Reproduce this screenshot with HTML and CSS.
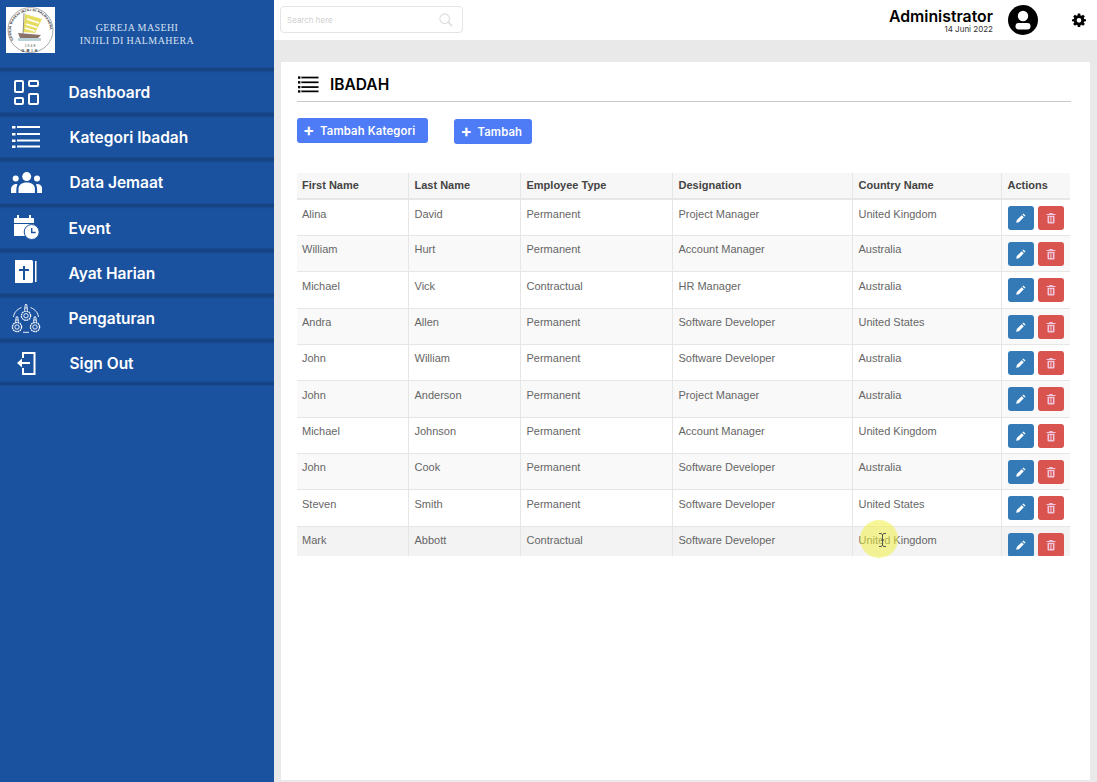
FILE: index.html
```html
<!DOCTYPE html>
<html lang="id">
<head>
<meta charset="utf-8">
<title>Ibadah</title>
<link rel="stylesheet" href="styles.css">
</head>
<body>
<div class="app">
  <aside class="sidebar">
    <div class="brand">
      <svg class="logo" viewBox="0 0 49 46">
        <rect width="49" height="46" fill="#fff"/>
        <circle cx="24.500" cy="23" r="22.500" fill="none" stroke="#555" stroke-width=".5"/>
        <path id="logo-arc" d="M7.500 33 A19.500 19.500 0 1 1 41.500 33" fill="none"/>
        <text class="logo-ring"><textPath href="#logo-arc">GEREJA MASEHI INJILI DI HALMAHERA</textPath></text>
        <path d="M19 7 L36 12 L29 26 L17 25 Z" fill="#e7dc62"/>
        <path d="M21 12 L33 16 M20 17 L31 20.500 M19 21 L29 24" stroke="#fff" stroke-width="1.600"/>
        <path d="M18 6 L17 28" stroke="#666" stroke-width=".7"/>
        <path d="M12 26 L35 28 L32 31 L14 31 Z" fill="#8a7268"/>
        <rect x="12" y="31" width="23" height="3" fill="#b9d3d8"/>
        <text x="24.500" y="39.500" class="logo-year">1948</text>
        <text x="24.500" y="45" class="logo-gmih">GMIH</text>
      </svg>
      <div class="brand-name">GEREJA MASEHI<br>INJILI DI HALMAHERA</div>
    </div>
    <nav class="menu">
      <a class="menu-item">
        <svg class="menu-icon" viewBox="0 0 34 34" fill="none" stroke="#fff" stroke-width="2"><rect x="7" y="7" width="8" height="11" rx="1"/><rect x="21" y="7" width="9" height="5" rx="1"/><rect x="7" y="24" width="8" height="6" rx="1"/><rect x="21" y="20" width="9" height="10" rx="1"/></svg>
        <span>Dashboard</span>
      </a>
      <a class="menu-item shift">
        <svg class="menu-icon" viewBox="0 0 34 34" fill="#fff"><use href="#list-icon"/></svg>
        <span>Kategori Ibadah</span>
      </a>
      <a class="menu-item shift">
        <svg class="menu-icon" viewBox="0 0 34 34" fill="#fff"><circle cx="18.700" cy="12.600" r="4.500"/><circle cx="7.700" cy="14.600" r="3"/><circle cx="29" cy="14.600" r="3"/><path d="M10.500 29v-4c0-4 3-6.500 8.200-6.500s8.200 2.500 8.200 6.500v4z"/><path d="M3 29v-3c0-3.500 2-6 5.500-6 .5 0 1 .2 1 .5C8.500 22 8.300 25 8.300 29z"/><path d="M34.500 29v-3c0-3.500-2-6-5.500-6-.5 0-1 .2-1 .5 1 1.500 1.200 4.500 1.200 8.500z"/></svg>
        <span>Data Jemaat</span>
      </a>
      <a class="menu-item">
        <svg class="menu-icon" viewBox="0 0 34 34" fill="#fff"><rect x="6" y="9" width="20" height="5" rx=".5"/><rect x="9" y="6" width="2" height="5"/><rect x="21" y="6" width="2" height="5"/><rect x="6" y="15" width="20" height="12"/><circle cx="23.700" cy="23" r="7.500" stroke="#1a52a0"/><path d="M23.700 19v4.500h4" fill="none" stroke="#1a52a0" stroke-width="1.400"/></svg>
        <span>Event</span>
      </a>
      <a class="menu-item">
        <svg class="menu-icon" viewBox="0 0 34 34" fill="#fff"><path d="M7 6h16.500A1.500 1.500 0 0 1 25 7.500v20a1.500 1.500 0 0 1-1.500 1.500H7z"/><rect x="27" y="7" width="1.500" height="21"/><path d="M15 12h2v3h4v2h-4v9h-2v-9h-4v-2h4z" fill="#1a52a0"/></svg>
        <span>Ayat Harian</span>
      </a>
      <a class="menu-item">
        <svg class="menu-icon" viewBox="0 0 34 34" fill="none" stroke="#fff" stroke-width=".9"><circle cx="18" cy="15.700" r="4.600" stroke-width="1.300" stroke-dasharray="1.800 .6"/><circle cx="18" cy="15.700" r="2.200"/><circle cx="9" cy="27" r="4.600" stroke-width="1.300" stroke-dasharray="1.800 .6"/><circle cx="9" cy="27" r="2.200"/><circle cx="27" cy="27" r="4.600" stroke-width="1.300" stroke-dasharray="1.800 .6"/><circle cx="27" cy="27" r="2.200"/><path d="M16.500 10.500l.8-6h1.400l.8 6M16.800 8h2.400M7.500 21.800l.8-5h1.400l.8 5M7.800 20h2.400M25.500 21.800l.8-5h1.400l.8 5M25.800 20h2.400M15 32.300h6M5.500 17c.5-4 3-7.500 8-9.500M30.500 17c-.5-4-3-7.500-8-9.500"/></svg>
        <span>Pengaturan</span>
      </a>
      <a class="menu-item shift">
        <svg class="menu-icon" viewBox="0 0 34 34" fill="none" stroke="#fff" stroke-width="2"><path d="M15 13V8h11.500v21H15v-6"/><path d="M22 18H13"/><path d="M14 13.500L9 18l5 4.500z" fill="#fff" stroke="none"/></svg>
        <span>Sign Out</span>
      </a>
    </nav>
  </aside>

  <div class="main">
    <header class="topbar">
      <div class="search">
        <span class="search-text">Search here</span>
        <svg class="search-icon" viewBox="0 0 16 16" fill="none" stroke="#dcdcdc" stroke-width="1.300"><circle cx="6.500" cy="6.500" r="5.500"/><path d="M10.500 10.500L15 15" stroke-width="1.800"/></svg>
      </div>
      <div class="user">
        <div class="user-text">
          <div class="user-name">Administrator</div>
          <div class="user-date">14 Juni 2022</div>
        </div>
        <svg class="avatar" viewBox="0 0 30 30"><circle cx="15" cy="15" r="15" fill="#000"/><circle cx="15" cy="11" r="5.200" fill="#fff"/><rect x="7.500" y="18" width="15" height="6.500" rx="3.200" fill="#fff"/></svg>
        <svg class="gear" viewBox="0 0 24 24"><path fill-rule="evenodd" d="M10 1h4l.6 3.200 1.700.7L19 3l3 3-1.900 2.700.7 1.700L24 11v3l-3.200.6-.7 1.700L22 19l-3 3-2.700-1.900-1.700.7L14 24h-4l-.6-3.200-1.700-.7L5 22l-3-3 1.900-2.700-.7-1.700L0 14v-3l3.200-.6.7-1.700L2 6l3-3 2.700 1.900 1.700-.7zM12 8.500a4 4 0 1 0 0 8 4 4 0 0 0 0-8z"/></svg>
      </div>
    </header>

    <main class="content">
      <section class="card">
        <div class="title-row">
          <svg class="title-icon" viewBox="0 0 22 17" fill="#000"><use href="#list-small"/></svg>
          <h1>IBADAH</h1>
        </div>
        <div class="actions">
          <button class="btn"><span class="plus">+</span>Tambah Kategori</button>
          <button class="btn btn-second"><span class="plus">+</span>Tambah</button>
        </div>
        <div class="table-wrap">
          <table>
            <colgroup><col class="c1"><col class="c2"><col class="c3"><col class="c4"><col class="c5"><col class="c6"></colgroup>
            <thead><tr><th>First Name</th><th>Last Name</th><th>Employee Type</th><th>Designation</th><th>Country Name</th><th>Actions</th></tr></thead>
            <tbody>
              <tr><td>Alina</td><td>David</td><td>Permanent</td><td>Project Manager</td><td>United Kingdom</td><td class="cell-actions"><span class="act edit"><svg viewBox="0 0 12 12"><use href="#pen"/></svg></span><span class="act del"><svg viewBox="0 0 12 12"><use href="#bin"/></svg></span></td></tr>
              <tr><td>William</td><td>Hurt</td><td>Permanent</td><td>Account Manager</td><td>Australia</td><td class="cell-actions"><span class="act edit"><svg viewBox="0 0 12 12"><use href="#pen"/></svg></span><span class="act del"><svg viewBox="0 0 12 12"><use href="#bin"/></svg></span></td></tr>
              <tr><td>Michael</td><td>Vick</td><td>Contractual</td><td>HR Manager</td><td>Australia</td><td class="cell-actions"><span class="act edit"><svg viewBox="0 0 12 12"><use href="#pen"/></svg></span><span class="act del"><svg viewBox="0 0 12 12"><use href="#bin"/></svg></span></td></tr>
              <tr><td>Andra</td><td>Allen</td><td>Permanent</td><td>Software Developer</td><td>United States</td><td class="cell-actions"><span class="act edit"><svg viewBox="0 0 12 12"><use href="#pen"/></svg></span><span class="act del"><svg viewBox="0 0 12 12"><use href="#bin"/></svg></span></td></tr>
              <tr><td>John</td><td>William</td><td>Permanent</td><td>Software Developer</td><td>Australia</td><td class="cell-actions"><span class="act edit"><svg viewBox="0 0 12 12"><use href="#pen"/></svg></span><span class="act del"><svg viewBox="0 0 12 12"><use href="#bin"/></svg></span></td></tr>
              <tr><td>John</td><td>Anderson</td><td>Permanent</td><td>Project Manager</td><td>Australia</td><td class="cell-actions"><span class="act edit"><svg viewBox="0 0 12 12"><use href="#pen"/></svg></span><span class="act del"><svg viewBox="0 0 12 12"><use href="#bin"/></svg></span></td></tr>
              <tr><td>Michael</td><td>Johnson</td><td>Permanent</td><td>Account Manager</td><td>United Kingdom</td><td class="cell-actions"><span class="act edit"><svg viewBox="0 0 12 12"><use href="#pen"/></svg></span><span class="act del"><svg viewBox="0 0 12 12"><use href="#bin"/></svg></span></td></tr>
              <tr><td>John</td><td>Cook</td><td>Permanent</td><td>Software Developer</td><td>Australia</td><td class="cell-actions"><span class="act edit"><svg viewBox="0 0 12 12"><use href="#pen"/></svg></span><span class="act del"><svg viewBox="0 0 12 12"><use href="#bin"/></svg></span></td></tr>
              <tr><td>Steven</td><td>Smith</td><td>Permanent</td><td>Software Developer</td><td>United States</td><td class="cell-actions"><span class="act edit"><svg viewBox="0 0 12 12"><use href="#pen"/></svg></span><span class="act del"><svg viewBox="0 0 12 12"><use href="#bin"/></svg></span></td></tr>
              <tr class="hover"><td>Mark</td><td>Abbott</td><td>Contractual</td><td>Software Developer</td><td>United Kingdom</td><td class="cell-actions"><span class="act edit"><svg viewBox="0 0 12 12"><use href="#pen"/></svg></span><span class="act del"><svg viewBox="0 0 12 12"><use href="#bin"/></svg></span></td></tr>
            </tbody>
          </table>
        </div>
      </section>
    </main>
  </div>
</div>

<div class="cursor-spot"></div>
<svg class="cursor-beam" viewBox="0 0 9 14" fill="none" stroke="#555" stroke-width="1"><path d="M1 .5h2.500L4.500 2l1-1.500H8M1 13.500h2.500L4.500 12l1 1.500H8M4.500 2v10M3 7h3"/></svg>

<svg class="defs" width="0" height="0">
  <defs>
    <g id="list-icon"><rect x="4" y="7" width="3.500" height="2.500"/><rect x="9" y="7" width="23" height="2"/><rect x="4" y="14" width="3.500" height="2.500"/><rect x="9" y="14" width="23" height="2"/><rect x="4" y="20.500" width="3.500" height="2.500"/><rect x="9" y="20.500" width="23" height="2"/><rect x="4" y="26.500" width="3.500" height="2.500"/><rect x="9" y="26.500" width="23" height="2"/></g>
    <g id="list-small"><rect x="0" y="0" width="2.500" height="2.500"/><rect x="3.500" y=".3" width="18" height="1.800"/><rect x="0" y="5" width="2.500" height="2.500"/><rect x="3.500" y="5.300" width="18" height="1.800"/><rect x="0" y="10" width="2.500" height="2.500"/><rect x="3.500" y="10.300" width="18" height="1.800"/><rect x="0" y="14.500" width="2.500" height="2.500"/><rect x="3.500" y="14.800" width="18" height="1.800"/></g>
    <path id="pen" d="M8.400 1.500l2.100 2.100-1 1-2.100-2.100zM6.700 3.200l2.100 2.100-4.900 4.900-2.700.6.600-2.700z" fill="#fff"/>
    <path id="bin" d="M4.500 1h3l.5 1h2.500v1h-9V2H4zM2.500 3.700h7v6.800a1 1 0 0 1-1 1h-5a1 1 0 0 1-1-1zM4 5v5h.9V5zm1.600 0v5h.9V5zM7.100 5v5H8V5z" fill="#f0c6dc" fill-rule="evenodd"/>
  </defs>
</svg>
</body>
</html>
```
FILE: styles.css
```css
* { box-sizing: border-box; }
html, body { margin: 0; padding: 0; height: 100%; }
body { background: #e9e9e9; font-family: "Liberation Sans", Arial, sans-serif; overflow: hidden; }
.app { display: flex; width: 1097px; height: 782px; }
.defs { position: absolute; }

.sidebar { width: 274px; flex: none; background: #1a52a0; color: #fff; }
.brand { height: 67px; display: flex; padding: 7px 0 0 6px; }
.logo { width: 49px; height: 46px; flex: none; }
.logo-ring { font: 700 3.300px "Liberation Sans", sans-serif; letter-spacing: .2px; fill: #222; }
.logo-year { font: 3.400px "Liberation Sans", sans-serif; letter-spacing: 1px; text-anchor: middle; fill: #444; }
.logo-gmih { font: 700 3.400px "Liberation Sans", sans-serif; letter-spacing: 2.300px; text-anchor: middle; fill: #222; }
.brand-name { width: 170px; margin-left: -3px; padding-top: 15px; text-align: center; font: 10px/12.500px "Liberation Serif", serif; color: #d6e0f0; letter-spacing: .4px; }
.menu { display: flex; flex-direction: column; }
.menu-item { height: 45.200px; display: flex; align-items: center; padding: 6px 0 0 8px; background: linear-gradient(to bottom, #1a4d97 0, #15417f 2px, #174789 4px, #1a52a0 6px); font: 600 15.500px Inter, "Liberation Sans", sans-serif; }
.menu-item:last-child { height: 48px; padding-bottom: 3px; background: linear-gradient(to bottom, #1a4d97 0, #15417f 2px, #174789 4px, #1a52a0 6px, #1a52a0 43px, #15417f 45px, #174789 47px, #1a52a0 48px); }
.menu-icon { width: 34px; height: 34px; flex: none; margin: -4px 26.500px 0 0; }
.shift span { margin-left: 1px; }

.main { flex: 1; display: flex; flex-direction: column; min-width: 0; }
.topbar { height: 40px; flex: none; background: #fff; display: flex; justify-content: space-between; padding: 6px 11px 0 6px; }
.search { width: 183px; height: 27px; border: 1px solid #e4e4e4; border-radius: 4px; display: flex; align-items: center; justify-content: space-between; padding: 0 9px 0 6px; }
.search-text { font: 8px Inter, sans-serif; color: #d0d0d0; }
.search-icon { width: 14px; height: 14px; }
.user { display: flex; align-items: flex-start; margin-top: -1px; }
.user-text { text-align: right; margin-top: 4px; }
.user-name { font: 600 15.800px/15px Inter, sans-serif; color: #000; }
.user-date { font: 8px/9px Inter, sans-serif; color: #333; margin-top: 1px; }
.avatar { width: 30px; height: 30px; margin-left: 15px; flex: none; }
.gear { width: 14px; height: 14px; margin: 8px 0 0 34px; flex: none; }

.content { flex: 1; padding: 22px 7px 2px; min-height: 0; }
.card { background: #fff; height: 100%; padding: 0 19px 0 16px; }
.title-row { height: 40px; display: flex; align-items: center; gap: 11px; padding-top: 5px; border-bottom: 1px solid #c9c9c9; padding-left: 1px; }
.title-icon { width: 21px; height: 17px; }
h1 { margin: 0; font: 600 15.500px Inter, sans-serif; color: #000; }
.actions { display: flex; align-items: flex-start; gap: 26px; padding-top: 16px; height: 71px; }
.btn { display: flex; align-items: center; height: 25px; padding: 0 13px 0 6px; background: #4e7bf6; color: #fff; border: 0; border-radius: 3px; font: 600 11.300px Inter, sans-serif; letter-spacing: .15px; }
.btn-second { margin-top: 1px; padding-right: 10px; }
.plus { font: 700 17px/17px Inter, sans-serif; width: 17px; text-align: left; }

.table-wrap { height: 383px; overflow: hidden; width: 773px; }
table { border-collapse: collapse; table-layout: fixed; width: 773px; font-size: 11px; color: #666; }
.c1 { width: 111px; } .c2 { width: 112px; } .c3 { width: 152px; } .c4 { width: 180px; } .c5 { width: 149px; } .c6 { width: 69px; }
th, td { border: 1px solid #e6e6e6; padding: 0 0 1px 6px; text-align: left; vertical-align: top; }
th:first-child, td:first-child { border-left: 0; padding-left: 5px; }
th:last-child, td:last-child { border-right: 0; padding-left: 6px; }
thead tr { height: 26px; background: #f7f7f7; }
th { border-top: 0; border-bottom-width: 2px; color: #444; font-weight: 700; font-size: 11px; vertical-align: middle; padding-bottom: 2px; }
tbody tr { height: 36.350px; }
tbody tr:nth-child(even) { background: #f9f9f9; }
tbody tr.hover { background: #f3f3f3; }
td { padding-top: 7.500px; line-height: 13px; }
.cell-actions { padding-top: 6px; white-space: nowrap; font-size: 0; }
.act { display: inline-flex; width: 26px; height: 24px; border-radius: 3px; align-items: center; justify-content: center; margin-right: 4px; }
.act svg { width: 12px; height: 12px; }
.edit { background: #337ab7; }
.del { background: #d9534f; }

.cursor-spot { position: absolute; left: 860px; top: 520px; width: 38px; height: 38px; border-radius: 50%; background: rgba(240, 240, 70, .55); }
.cursor-beam { position: absolute; left: 878px; top: 533px; width: 9px; height: 14px; }
```
